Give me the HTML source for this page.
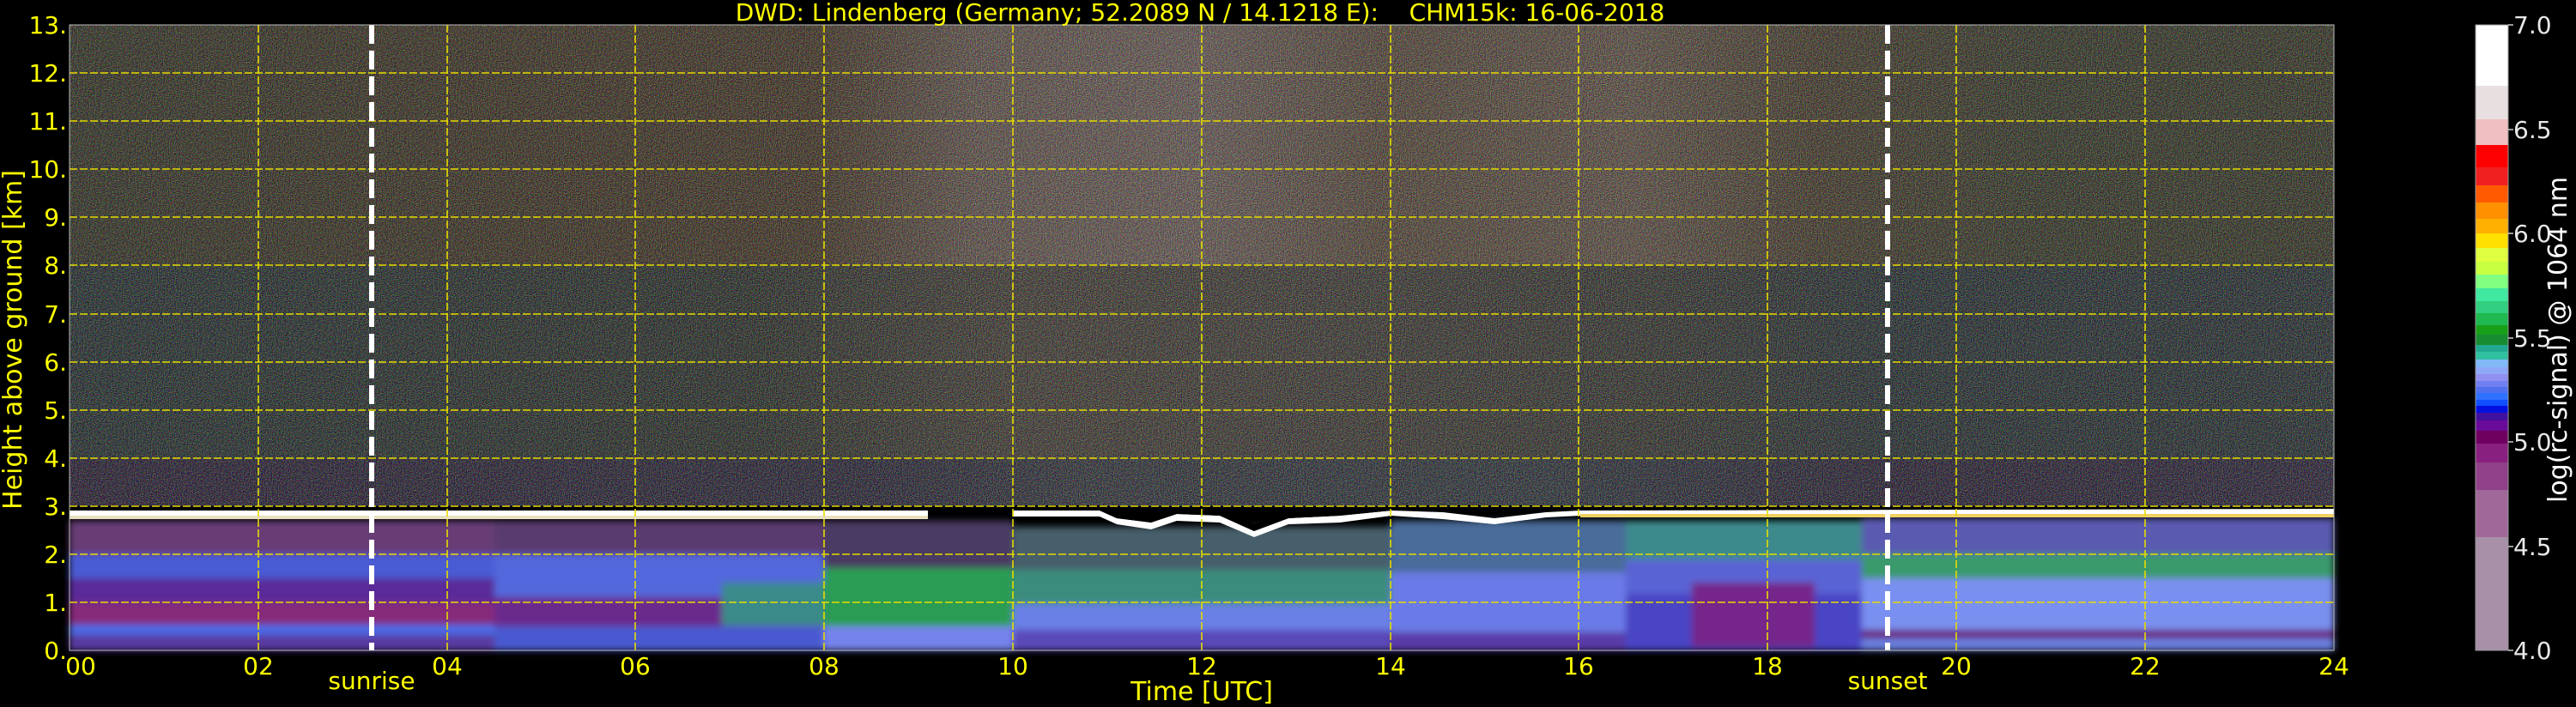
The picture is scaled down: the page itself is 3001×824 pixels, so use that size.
<!DOCTYPE html>
<html><head><meta charset="utf-8"><style>
html,body{margin:0;padding:0;background:#000;}
svg{display:block}
text{font-family:"DejaVu Sans","Liberation Sans",sans-serif}
</style></head><body>
<svg width="3001" height="824" viewBox="0 0 3001 824" xmlns="http://www.w3.org/2000/svg">
<defs>
<linearGradient id="gTop" x1="0" x2="1" y1="0" y2="0">
<stop offset="0" stop-color="#343426"/><stop offset="0.19" stop-color="#3e3424"/>
<stop offset="0.33" stop-color="#443626"/><stop offset="0.4" stop-color="#62544c"/>
<stop offset="0.5" stop-color="#6a5c56"/><stop offset="0.58" stop-color="#56483a"/>
<stop offset="0.69" stop-color="#605246"/><stop offset="0.77" stop-color="#463c2c"/>
<stop offset="0.87" stop-color="#363828"/><stop offset="1" stop-color="#363626"/>
</linearGradient>
<linearGradient id="gMid" x1="0" x2="1" y1="0" y2="0">
<stop offset="0" stop-color="#263030"/><stop offset="0.3" stop-color="#2c302a"/>
<stop offset="0.42" stop-color="#443e36"/><stop offset="0.55" stop-color="#403c36"/>
<stop offset="0.7" stop-color="#363630"/><stop offset="0.8" stop-color="#283032"/>
<stop offset="1" stop-color="#283032"/>
</linearGradient>
<linearGradient id="gLow" x1="0" x2="1" y1="0" y2="0">
<stop offset="0" stop-color="#2a2034"/><stop offset="0.35" stop-color="#2a2636"/>
<stop offset="0.45" stop-color="#34363c"/><stop offset="0.65" stop-color="#30363c"/>
<stop offset="0.8" stop-color="#2a2234"/><stop offset="1" stop-color="#2c2438"/>
</linearGradient>
<filter id="noise" x="0" y="0" width="100%" height="100%">
<feTurbulence type="fractalNoise" baseFrequency="0.85" numOctaves="1" seed="3"/>
<feColorMatrix type="matrix" values="5 0 0 0 -2.3  0 5 0 0 -2.3  0 0 5 0 -2.3  0 0 0 0 1"/>
</filter>
<filter id="soft"><feGaussianBlur stdDeviation="4"/></filter>
</defs>

<g transform="translate(81,29)">
<rect x="0" y="0" width="2638" height="300" fill="url(#gTop)"/>
<rect x="0" y="280" width="2638" height="230" fill="url(#gMid)"/>
<rect x="0" y="505" width="2638" height="60" fill="url(#gLow)"/>

<g filter="url(#soft)">
<rect x="0" y="578" width="495" height="39" fill="#683c76"/>
<rect x="0" y="617" width="495" height="30" fill="#4a5cd4"/>
<rect x="0" y="645" width="495" height="28" fill="#5a2c98"/>
<rect x="0" y="673" width="495" height="28" fill="#862c7a"/>
<rect x="0" y="699" width="495" height="12" fill="#4a6ae6"/>
<rect x="0" y="711" width="495" height="18" fill="#5a3aa0"/>
<rect x="495" y="578" width="384" height="39" fill="#5a3a70"/>
<rect x="495" y="617" width="384" height="50" fill="#5268dc"/>
<rect x="495" y="667" width="384" height="34" fill="#6a2c8c"/>
<rect x="495" y="701" width="384" height="28" fill="#4a5ad0"/>
<rect x="760" y="650" width="119" height="50" fill="#3a8a8a"/>
<rect x="879" y="578" width="220" height="55" fill="#4a3a62"/>
<rect x="879" y="633" width="220" height="68" fill="#2a9c52"/>
<rect x="879" y="701" width="220" height="28" fill="#7484ec"/>
<rect x="1099" y="585" width="440" height="50" fill="#465e6a"/>
<rect x="1099" y="635" width="440" height="40" fill="#3a8c7c"/>
<rect x="1099" y="675" width="440" height="30" fill="#6a80e6"/>
<rect x="1099" y="705" width="440" height="24" fill="#5a4ab8"/>
<rect x="1539" y="578" width="274" height="60" fill="#4a6c9a"/>
<rect x="1539" y="638" width="274" height="70" fill="#6a7ae6"/>
<rect x="1539" y="708" width="274" height="21" fill="#5a3aa8"/>
<rect x="1813" y="578" width="275" height="45" fill="#3c8a8c"/>
<rect x="1813" y="623" width="275" height="40" fill="#5a64d4"/>
<rect x="1813" y="663" width="275" height="66" fill="#4a44c4"/>
<rect x="1890" y="650" width="143" height="75" fill="#76288a"/>
<rect x="2088" y="575" width="550" height="42" fill="#5a5ab0"/>
<rect x="2088" y="617" width="550" height="28" fill="#3a9a6c"/>
<rect x="2088" y="645" width="550" height="62" fill="#7a90f0"/>
<rect x="2088" y="705" width="550" height="10" fill="#6a1a7a"/>
<rect x="2088" y="715" width="550" height="14" fill="#6a80e0"/>
</g>

<rect x="0" y="561" width="2638" height="5" fill="#000"/>
<path d="M0 566 H1000 V572 H0 Z" fill="#fff"/>
<rect x="0" y="572" width="1000" height="4" fill="#e8e0c0"/>
<path d="M1099 566 L1200 566 L1220 575 L1260 580 L1290 570 L1340 572 L1380 590 L1420 575 L1480 572 L1540 566 L1600 568 L1660 575 L1720 568 L1760 566 L2638 564 L2638 570 L1760 572 L1720 574 L1660 582 L1600 576 L1540 572 L1480 580 L1420 582 L1380 597 L1340 580 L1290 578 L1260 588 L1220 582 L1200 573 L1099 573 Z" fill="#fff"/>
<path d="M1099 560 L1200 560 L1220 566 L1260 572 L1290 562 L1340 564 L1380 582 L1420 566 L1480 564 L1540 560 L1760 560 V566 L1540 566 L1480 572 L1420 575 L1380 590 L1340 572 L1290 570 L1260 580 L1220 575 L1200 566 L1099 566 Z" fill="#000"/>
<rect x="1760" y="570" width="878" height="4" fill="#f0d060"/>

<rect x="0" y="0" width="2638" height="560" filter="url(#noise)" opacity="0.3"/>

<g stroke="#e6dc00" stroke-width="1.6" stroke-dasharray="9 3" fill="none">
<line x1="0" y1="56" x2="2638" y2="56"/><line x1="0" y1="112" x2="2638" y2="112"/>
<line x1="0" y1="168" x2="2638" y2="168"/><line x1="0" y1="224" x2="2638" y2="224"/>
<line x1="0" y1="280" x2="2638" y2="280"/><line x1="0" y1="337" x2="2638" y2="337"/>
<line x1="0" y1="393" x2="2638" y2="393"/><line x1="0" y1="449" x2="2638" y2="449"/>
<line x1="0" y1="505" x2="2638" y2="505"/><line x1="0" y1="561" x2="2638" y2="561"/>
<line x1="0" y1="617" x2="2638" y2="617"/><line x1="0" y1="673" x2="2638" y2="673"/>
<line x1="220" y1="0" x2="220" y2="729"/><line x1="440" y1="0" x2="440" y2="729"/>
<line x1="659" y1="0" x2="659" y2="729"/><line x1="879" y1="0" x2="879" y2="729"/>
<line x1="1099" y1="0" x2="1099" y2="729"/><line x1="1319" y1="0" x2="1319" y2="729"/>
<line x1="1539" y1="0" x2="1539" y2="729"/><line x1="1758" y1="0" x2="1758" y2="729"/>
<line x1="1978" y1="0" x2="1978" y2="729"/><line x1="2198" y1="0" x2="2198" y2="729"/>
<line x1="2418" y1="0" x2="2418" y2="729"/>
</g>
<g stroke="#fff" stroke-width="6" stroke-dasharray="22 8">
<line x1="352" y1="0" x2="352" y2="729"/>
<line x1="2118" y1="0" x2="2118" y2="729"/>
</g>
<rect x="0" y="0" width="2638" height="729" fill="none" stroke="#bbb" stroke-width="1"/>
</g>

<text x="1398" y="24" font-size="28" fill="#ffff00" text-anchor="middle" xml:space="preserve">DWD: Lindenberg (Germany; 52.2089 N / 14.1218 E):    CHM15k: 16-06-2018</text>

<g font-size="28" fill="#ffff00" text-anchor="end">
<text x="78" y="39">13.</text><text x="78" y="95">12.</text><text x="78" y="151">11.</text>
<text x="78" y="207">10.</text><text x="78" y="263">9.</text><text x="78" y="319">8.</text>
<text x="78" y="376">7.</text><text x="78" y="432">6.</text><text x="78" y="488">5.</text>
<text x="78" y="544">4.</text><text x="78" y="600">3.</text><text x="78" y="656">2.</text>
<text x="78" y="712">1.</text><text x="78" y="768">0.</text>
</g>
<text transform="translate(25,396) rotate(-90)" font-size="30" fill="#ffff00" text-anchor="middle">Height above ground [km]</text>

<g font-size="28" fill="#ffff00" text-anchor="middle">
<text x="94" y="786">00</text><text x="301" y="786">02</text><text x="521" y="786">04</text>
<text x="740" y="786">06</text><text x="960" y="786">08</text><text x="1180" y="786">10</text>
<text x="1400" y="786">12</text><text x="1620" y="786">14</text><text x="1839" y="786">16</text>
<text x="2059" y="786">18</text><text x="2279" y="786">20</text><text x="2499" y="786">22</text>
<text x="2719" y="786">24</text>
<text x="433" y="803">sunrise</text>
<text x="2199" y="803">sunset</text>
</g>
<text x="1400" y="816" font-size="30" fill="#ffff00" text-anchor="middle">Time [UTC]</text>

<g transform="translate(2884,0)">
<rect y="29" width="38" height="71" fill="#ffffff"/>
<rect y="100" width="38" height="39" fill="#e8e0e0"/>
<rect y="139" width="38" height="30" fill="#f0c0c0"/>
<rect y="169" width="38" height="26" fill="#ff0000"/>
<rect y="195" width="38" height="21" fill="#f02020"/>
<rect y="216" width="38" height="20" fill="#ff5a00"/>
<rect y="236" width="38" height="19" fill="#ff9000"/>
<rect y="255" width="38" height="17" fill="#ffb000"/>
<rect y="272" width="38" height="17" fill="#ffe000"/>
<rect y="289" width="38" height="16" fill="#e0ff40"/>
<rect y="305" width="38" height="15" fill="#c8ff40"/>
<rect y="320" width="38" height="16" fill="#80ff80"/>
<rect y="336" width="38" height="15" fill="#40e8a0"/>
<rect y="351" width="38" height="14" fill="#30d080"/>
<rect y="365" width="38" height="14" fill="#20b850"/>
<rect y="379" width="38" height="11" fill="#18a018"/>
<rect y="390" width="38" height="12" fill="#188c30"/>
<rect y="402" width="38" height="8" fill="#20a890"/>
<rect y="410" width="38" height="9" fill="#30c0a0"/>
<rect y="419" width="38" height="9" fill="#80b8f8"/>
<rect y="428" width="38" height="8" fill="#90a8f8"/>
<rect y="436" width="38" height="8" fill="#9090f0"/>
<rect y="444" width="38" height="7" fill="#7080f0"/>
<rect y="451" width="38" height="7" fill="#5070f0"/>
<rect y="458" width="38" height="8" fill="#3070ff"/>
<rect y="466" width="38" height="7" fill="#1050ff"/>
<rect y="473" width="38" height="8" fill="#0010e0"/>
<rect y="481" width="38" height="9" fill="#4010a0"/>
<rect y="490" width="38" height="12" fill="#6a0a9a"/>
<rect y="502" width="38" height="15" fill="#700060"/>
<rect y="517" width="38" height="22" fill="#882080"/>
<rect y="539" width="38" height="32" fill="#904088"/>
<rect y="571" width="38" height="55" fill="#a06898"/>
<rect y="626" width="38" height="132" fill="#a890a8"/>
<rect y="29" width="38" height="729" fill="none" stroke="#999" stroke-width="1"/>
<g stroke="#ccc" stroke-width="1.5">
<line x1="38" y1="29" x2="44" y2="29"/><line x1="38" y1="151" x2="44" y2="151"/>
<line x1="38" y1="272" x2="44" y2="272"/><line x1="38" y1="394" x2="44" y2="394"/>
<line x1="38" y1="515" x2="44" y2="515"/><line x1="38" y1="637" x2="44" y2="637"/>
<line x1="38" y1="758" x2="44" y2="758"/>
</g>
</g>
<g font-size="28" fill="#e8e8e8">
<text x="2928" y="39">7.0</text><text x="2928" y="161">6.5</text>
<text x="2928" y="282">6.0</text><text x="2928" y="404">5.5</text>
<text x="2928" y="525">5.0</text><text x="2928" y="647">4.5</text>
<text x="2928" y="768">4.0</text>
</g>
<text transform="translate(2990,396) rotate(-90)" font-size="30" fill="#ffffff" text-anchor="middle">log(rc-signal) @ 1064 nm</text>
</svg>
</body></html>
